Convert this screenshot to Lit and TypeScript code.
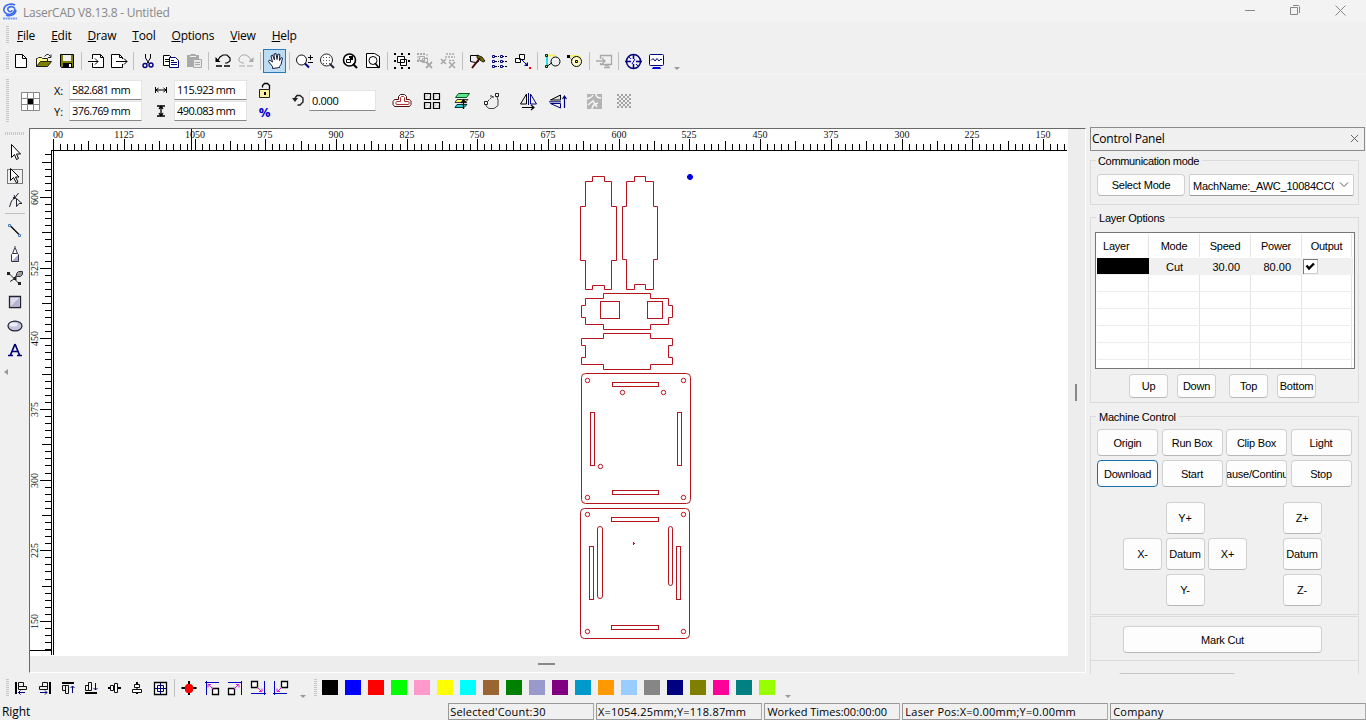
import { LitElement, html, svg, css, nothing } from "lit";
import { customElement } from "lit/decorators.js";

/* Icon glyphs, drawn on a 20x20 grid centred on 10,10 */
const K = "#000";
const N = "#00007a";
const G = "#a9a9a9";
const icons: Record<string, any> = {
  new: svg`<path d="M4.500 3.500h7l4 4v9h-11z" fill="#fff" stroke=${K}/><path d="M11.500 3.500v4h4" fill="none" stroke=${K}/>`,
  open: svg`<path d="M2.500 16V7.500h1l1-1h3l1 1h5v3" fill="#ffff90" stroke="#222"/><path d="M2.500 15.500l4-5h11l-4 5z" fill="#808000" stroke="#222"/><path d="M10.500 5.500l2-2h2l2 2M14 6.500h3v-3" fill="none" stroke="#222"/>`,
  save: svg`<path d="M3.500 3.500h13v13h-12l-1-1z" fill="#808000" stroke=${K}/><path d="M6 4h8v6H6z" fill="#f0f0f0"/><path d="M6 12h9v4H6z"/><path d="M12 13h2v3h-2z" fill="#fff"/>`,
  import: svg`<path d="M6.500 8V3.500h8l3 3v10h-11V12" fill="#fff" stroke=${K}/><path d="M14.500 3.500v3h3M2 10.500h10M9 7.500l3 3-3 3" fill="none" stroke=${K}/>`,
  export: svg`<path d="M13.500 8V6.500l-3-3h-8v13h11V13" fill="#fff" stroke=${K}/><path d="M10.500 3.500v3h3M7 10.500h11M15 7.500l3 3-3 3" fill="none" stroke=${K}/>`,
  cut: svg`<path d="M7.500 3v4l4 6M12.500 3v4l-4 6" fill="none" stroke=${K}/><circle cx="7" cy="14.500" r="2" fill="none" stroke=${N} stroke-width="1.400"/><circle cx="13" cy="14" r="2" fill="none" stroke=${N} stroke-width="1.400"/>`,
  copy: svg`<path d="M2.500 4.500h6l3 3v7h-9z" fill="#fff" stroke=${K}/><path d="M4 8.500h5M4 10.500h5" stroke=${K}/><path d="M8.500 6.500h6l3 3v7h-9z" fill="#fff" stroke=${N}/><path d="M10 9.500h3M10 11.500h6M10 13.500h6" stroke=${N}/>`,
  paste: svg`<path d="M3 4h3l1-1h4l1 1h3v4H9v8H3z" fill=${G}/><path d="M6 5.500h6" stroke="#f0f0f0"/><path d="M9.500 8.500h8v8h-8z" fill="#e8e8e8" stroke=${G}/><path d="M11 11.500h5M11 13.500h5" stroke=${G}/>`,
  undo: svg`<path d="M5 9l2-3 3-2h4l3 3v3l-3 2h-2" fill="none" stroke=${K} stroke-width="1.200"/><path d="M2.500 6v5h5z"/><path d="M3 15h6M11 15h6" stroke=${K} stroke-width="1.500"/>`,
  redo: svg`<path d="M15 9l-2-3-3-2H6L3 7v3l3 2h2" fill="none" stroke=${G}/><path d="M17.500 6v5h-5z" fill=${G}/><path d="M3 15h6M11 15h6" stroke=${G}/>`,
  hand: svg`<path d="M7.500 17.500v-2l-4-5 1-1.500 3 2-1.500-6 1.500-1 2 5-.5-6 2-.5 1 6 1-5.500 1.800.5-.3 6 1.800-3 1.200.6-1.500 6.400-1.500 2v1z" fill="#fff" stroke="#1b1b3a"/>`,
  zoompm: svg`<circle cx="7.500" cy="9" r="5" fill="#fff" stroke="#111"/><path d="M11 12.500l4 4" stroke=${N} stroke-width="2"/><path d="M14 6.500h5M16.500 4v5M14 11.500h5" stroke=${K}/>`,
  zoomsel: svg`<circle cx="9.500" cy="9" r="6" fill="#fff" stroke="#222"/><path d="M6 6.500h8M6 9.500h8M6 12.500h7" stroke="#555" stroke-dasharray="1 2"/><path d="M13 13l4 4" stroke="#223" stroke-width="2"/>`,
  zoomobj: svg`<circle cx="9.500" cy="9" r="6" fill="#fff" stroke=${K} stroke-width="1.600"/><path d="M6.500 8.500h4v3h-4z" fill="none" stroke=${K}/><path d="M9 5h4v4h-3V7H9z"/><path d="M13 13l4 4" stroke=${K} stroke-width="2"/>`,
  zoompage: svg`<path d="M3.500 2.500h8l5 3v11h-13z" fill="#fff" stroke=${K}/><circle cx="10" cy="9.500" r="4" fill="none" stroke=${K}/><path d="M12 12l4 5" stroke=${K} stroke-width="1.600"/>`,
  group: svg`<path d="M5.500 5.500h7v6h-7zM8.500 8.500h6v6h-6z" fill="#fff" stroke=${K}/><path d="M2 3h2M9 3h2M16 3h2M2 10h2M16 10h2M2 17h2M9 17h2M16 17h2" stroke=${K} stroke-width="2"/>`,
  ungroup: svg`<path d="M2 3h8M2 10h8" stroke=${G} stroke-width="2" stroke-dasharray="2 1"/><path d="M4.500 5.500h5v4h-5zM7.500 7.500h5v4h-5z" fill="none" stroke=${G}/><path d="M12 3v5M3 5v4" stroke=${G} stroke-dasharray="2 1"/><path d="M11 11l6 6M17 11l-6 6" stroke=${G} stroke-width="1.800"/>`,
  ungroupall: svg`<path d="M8 3h8M7 6h10M11 9.500h6" stroke=${G} stroke-width="1.500" stroke-dasharray="2 1"/><path d="M3 8l5 5M8 8l-5 5M11 11l6 6M17 11l-6 6" stroke=${G} stroke-width="1.700"/>`,
  hammer: svg`<path d="M3.500 4.500h8v6l-3 1-5-1z" fill="#eee" stroke=${K}/><path d="M10 4l5 2 3 4-2 1-6-4z" fill="#6b7000" stroke=${K} stroke-width=".8"/><path d="M13 7l-8 10" stroke="#400" stroke-width="2"/>`,
  nodes: svg`<path d="M5 5.500h4M12 5.500h6M5 10.500h4M12 10.500h6M5 15.500h4M12 15.500h6" stroke=${K} stroke-dasharray="2 1"/><g fill="#fff" stroke=${N}><path d="M2.500 4.500h2v2h-2zM10.500 4.500h2v2h-2zM2.500 9.500h2v2h-2zM10.500 9.500h2v2h-2zM2.500 14.500h2v2h-2zM10.500 14.500h2v2h-2z"/></g>`,
  reorder: svg`<path d="M6.500 3.500h5v5h-5zM2.500 7.500h5v4h-5z" fill="#fff" stroke=${K}/><path d="M9 9l6 6" stroke="#0000d0"/><path d="M15 11v4h-4z" fill=${N}/><path d="M16 16h2v2h-2z" fill="red"/>`,
  curvea: svg`<path d="M5 5v11" stroke="#20e0e0" stroke-width="2"/><path d="M6 4.500h8" stroke="#f4ef60" stroke-width="2"/><path d="M5 15.500l5-4" stroke=${K}/><circle cx="13.500" cy="10.500" r="4.500" fill="none" stroke=${K}/><path d="M3.500 3.500h2v2h-2zM3.500 14.500h2v2h-2z" fill="#8f8" stroke="#111"/>`,
  curveb: svg`<path d="M5 5h7l4 2" stroke="#f4ef60" stroke-width="2" fill="none"/><path d="M4 6l4 4" stroke=${K} stroke-dasharray="2 1"/><circle cx="11.500" cy="10.500" r="5" fill="#fbf9d0" stroke=${K}/><path d="M2 4h3v3H2z"/><path d="M10.500 9.500h2v2h-2z" fill="#ff0" stroke=${K}/>`,
  send: svg`<path d="M6.500 8V4.500h11v9h-11V12M10 16.500h6M11 14.500h4M2 10h9M8 7l3 3-3 3" fill="none" stroke=${G} stroke-width="1.300"/>`,
  target: svg`<circle cx="10.500" cy="10.500" r="7" fill="none" stroke=${N} stroke-width="1.500"/><path d="M10.500 3v5M10.500 13v5M2 10.500h6M13 10.500h6" stroke=${N} stroke-width="1.500"/><path d="M12 8l-3 5M6 6l2 2M13 13l2 2" stroke="#0000d0"/>`,
  monitor: svg`<rect x="3.500" y="3.500" width="14" height="11" rx="1" fill="#fff" stroke=${N}/><path d="M5 9.500l2-2 2 2.500 2-2.500 2 2.500 2-2 1 1" fill="none" stroke=${N}/><path d="M7 16h7l1 2H6z" fill="#0000e0"/>`,

  weld: svg`<path d="M6.500 8.500V5.500l2-2h4l2 2v3h3l1.500 2v3l-1.500 2h-15L1 13.500v-3l1.500-2z" fill="#fff" stroke="#4a1010"/><path d="M8.500 10.500V6.500l1-1h2l1 1v4h4l.5.500v2l-.5.500h-12l-.5-.500v-2l.5-.500z" fill="none" stroke="#b03030"/>`,
  array: svg`<g fill="#ddd" stroke=${K} stroke-width="1.200"><path d="M2.500 2.500h6v6h-6zM11.500 2.500h6v6h-6zM2.500 11.500h6v6h-6zM11.500 11.500h6v6h-6z"/></g><path d="M4 8l4-4M13 8l4-4M4 17l4-4M13 17l4-4" stroke="#fff"/>`,
  layers: svg`<path d="M6.500 2.500h11l-3 4h-11z" fill="#60e890" stroke="#075020"/><path d="M5 8.500h11l-3 3H3z" fill="#ffff50" stroke="#333"/><path d="M5 13.500h10l-3 3H3z" fill="#20d8e0" stroke="#033"/><path d="M11.500 18V10M9 12l2.500-3 3 3" fill="none" stroke=${K} stroke-width="1.300"/>`,
  nodeedit: svg`<path d="M4 14v1l3 2.500h5l4-3V9l-1-3" fill="none" stroke="#444"/><path d="M2.500 10.500h3v3h-3zM13.500 2.500h3v3h-3z" fill="#fff" stroke="#222"/><path d="M6 10l5-5M8 5h3v3" fill="none" stroke="#222" stroke-dasharray="2 1"/>`,
  mirrorh: svg`<path d="M8.500 3v10h-6z" fill="#eee" stroke=${K}/><path d="M12.500 3v10h6z" fill="#eee" stroke=${N}/><path d="M10.500 2v12" stroke=${N}/><path d="M4 16.500h12M13 14l3 2.500-3 2.500" fill="none" stroke=${K} stroke-width="1.200"/>`,
  mirrorv: svg`<path d="M12.500 4v5h-10z" fill="#ddd" stroke=${K}/><path d="M12.500 17v-4.500h-10z" fill="#eee" stroke=${N}/><path d="M1 10.800h12" stroke=${N}/><path d="M16.500 17V5M14.500 8l2-3 2 3" fill="none" stroke=${N} stroke-width="1.200"/>`,
  trace: svg`<path d="M3 3h15v15H3z" fill="#b4b4b4"/><path d="M3 8c3-2 4 0 6-4M8 18c0-4 3-5 6-6M12 3c0 3 2 4 5 4M4 14l5-4 4 6" stroke="#f4f4f4" stroke-width="1.600" fill="none"/>`,
  dither: svg`${[0, 1, 2, 3, 4, 5, 6].map((r) => svg`<path d="M${3 + (r % 2) * 2} ${4 + r * 2}H17" stroke="#a2a2a2" stroke-width="2" stroke-dasharray="2 2"/>`)}`,
  lock: svg`<path d="M7.500 6.500v-2l2-2h3l2 2v4" fill="none" stroke=${K} stroke-width="1.300"/><path d="M4.500 8.500h10v8h-10z" fill="#f8f2a0" stroke="#222"/><path d="M9 11h2v3H9z"/>`,
  width: svg`<path d="M4.500 7v6M15.500 7v6M5 10h10M7.500 8L5 10l2.500 2M12.500 8l2.500 2-2.500 2" fill="none" stroke=${K}/>`,
  height: svg`<path d="M6 5h8M6 15h8M10 5v10M8 8l2-3 2 3M8 12l2 3 2-3" fill="none" stroke=${K} stroke-width="1.300"/>`,
  rotate: svg`<path d="M7 8l2-2.500h3L15 8v4l-3 3H9.500" fill="none" stroke="#222" stroke-width="1.400"/><path d="M4 8h6l-3 4z" fill="#222"/>`,

  pick: svg`<path d="M6.500 2.500v13l3-3 2 5 2-1-2-4.500h4z" fill="#fff" stroke=${K}/>`,
  picksel: svg`<rect x="2.500" y="3.500" width="15" height="14" fill="none" stroke=${K} stroke-dasharray="1 1"/><path d="M5.500 2.500v12l3-3 3 5.500 1.500-1-2.500-5h3.500z" fill="#fff" stroke=${K}/>`,
  shape: svg`<path d="M4.500 17l2-6 4-4 3-4M9 5l2 4M11.500 8.500v8l2.500-3h3z" fill="none" stroke="#223"/><path d="M8 7h2v2H8z" fill="#223"/>`,
  line: svg`<path d="M5 5.500l10 10" stroke=${K} stroke-width="1.300"/><path d="M3.500 4.500h2v2h-2zM13.500 14.500h2v2h-2z" fill="#fff" stroke="#4878b0"/>`,
  pen: svg`<path d="M10 2v3M7.500 9.500l2-5h1l2 5M6.500 10.500l1-1h5l1 1v7h-7z" fill="#fff" stroke="#334"/><path d="M7 17l6-6v6z" fill="#a8a8cc"/>`,
  bezier: svg`<path d="M4 5.500l10 10M5 13.500l5-3 1-3" fill="none" stroke="#223"/><path d="M11.500 8.500v-3l2-2h4v3l-2 2z" fill="#999" stroke="#334"/><path d="M2 4h3v3H2zM8.500 9h3v3h-3zM13 14h3v3h-3z" fill="#222"/>`,
  rect: svg`<path d="M4.500 4.500h11v11h-11z" fill="#dcdcec" stroke="#223" stroke-width="1.300"/><path d="M14 6v8H6z" fill="#b4b4d0"/>`,
  ellipse: svg`<ellipse cx="10" cy="10" rx="7" ry="4.800" fill="#c4c4dc" stroke="#223" stroke-width="1.200"/><ellipse cx="8.500" cy="8.500" rx="4" ry="2" fill="#eeeef8"/>`,
  text: svg`<path d="M3 15.500h5M12 15.500h5M5.500 15l4.500-11M10 4l4.500 11M7.500 11.500h5" fill="none" stroke=${N} stroke-width="1.700"/>`,

  aleft: svg`<path d="M4 4v12" stroke=${K} stroke-width="2"/><path d="M6.500 4.500h5v4h-5zM6.500 8.500h8v3h-8z" fill="none" stroke="#111"/><path d="M6 14.500h7M8.500 12.500l-2 2 2 2" fill="none" stroke=${N}/>`,
  aright: svg`<path d="M15 4v12" stroke=${K} stroke-width="2"/><path d="M7.500 4.500h5v4h-5zM4.500 8.500h8v3h-8z" fill="none" stroke="#111"/><path d="M5 14.500h7M10 12.500l2 2-2 2" fill="none" stroke=${N}/>`,
  atop: svg`<path d="M4 5h12" stroke=${K} stroke-width="2"/><path d="M4.500 7.500h3v5h-3zM7.500 7.500h3v8h-3z" fill="none" stroke="#111"/><path d="M14.500 15V8M12.500 10l2-2 2 2" fill="none" stroke=${N}/>`,
  abottom: svg`<path d="M4 15h12" stroke=${K} stroke-width="2"/><path d="M4.500 7.500h3v5h-3zM7.500 4.500h3v8h-3z" fill="none" stroke="#111"/><path d="M14.500 5v7M12.500 10l2 2 2-2" fill="none" stroke=${N}/>`,
  amiddle: svg`<path d="M4 10h3M14 10h3" stroke=${K} stroke-width="2"/><path d="M6.500 7.500h3v5h-3zM10.500 5.500h3v9h-3z" fill="#fff" stroke="#111"/>`,
  acenter: svg`<path d="M10 4v3M10 14v2" stroke=${K} stroke-width="2"/><path d="M7.500 6.500h5v3h-5zM5.500 11.500h9v3h-9z" fill="#fff" stroke="#111"/><path d="M10 9v3" stroke=${K}/>`,
  apage: svg`<path d="M4.500 4.500h12v12h-12z" fill="#fff" stroke=${K} stroke-width="1.300"/><path d="M7.500 7.500h6v6h-6z" fill="none" stroke=${N}/><path d="M10.500 5v11M5 10.500h11" stroke=${N}/>`,
  dot: svg`<path d="M10 3v14M2.500 10h15" stroke=${K} stroke-width="2"/><path d="M6 8l2-2h4l2 2v5l-2 2H8l-2-2z" fill="red"/>`,
  ctl: svg`<path d="M3 4.500h14M4.500 3v14" stroke="#0000c0"/><path d="M10.500 10.500h6v6h-6z" fill="#fff" stroke=${K} stroke-width="1.300"/><path d="M6 6l5 5M6 9.500v-3h3" fill="none" stroke="#d020d0"/>`,
  ctr: svg`<path d="M3 4.500h14M16.500 3v14" stroke="#0000c0"/><path d="M3.500 10.500h6v6h-6z" fill="#fff" stroke=${K} stroke-width="1.300"/><path d="M9 11l5-5M11 6.500h3v3" fill="none" stroke="#d020d0"/>`,
  cbr: svg`<path d="M3 15.500h15M16.500 3v14" stroke="#0000c0"/><path d="M3.500 3.500h6v6h-6z" fill="#fff" stroke=${K} stroke-width="1.300"/><path d="M9 9l5 5M11 13.500h3v-3" fill="none" stroke="#d020d0"/>`,
  cbl: svg`<path d="M2 15.500h14M3.500 3v14" stroke="#0000c0"/><path d="M10.500 3.500h6v6h-6z" fill="#fff" stroke=${K} stroke-width="1.300"/><path d="M11 9l-5 5M9 13.500H6v-3" fill="none" stroke="#d020d0"/>`,
};

const icon = (n: string) =>
  html`<span class="cell ${n === "hand" ? "active" : ""}"><svg width="20" height="20" viewBox="0 0 20 20">${icons[n]}</svg></span>`;
const bar = (list: string[]) =>
  list.map((n) => (n === "|" ? html`<i class="sep"></i>` : icon(n)));

const STANDARD =
  "new open save | import export | cut copy paste | undo redo | hand | zoompm zoomsel zoomobj zoompage | group ungroup ungroupall | hammer nodes reorder | curvea curveb | send | target monitor".split(" ");
const TOOLS = "pick picksel shape | line pen bezier rect ellipse text".split(" ");
const ALIGN = "aleft aright atop abottom amiddle acenter apage | dot ctl ctr cbr cbl".split(" ");
const COLORS = [
  "#000000", "#0000ff", "#ff0000", "#00ff00", "#ff99cc", "#ffff00", "#00ffff", "#996633", "#008000", "#9999cc",
  "#800080", "#0099cc", "#ff9900", "#99ccff", "#868686", "#000080", "#808000", "#ff0099", "#008080", "#99ff00",
];

@customElement("cad-canvas")
class CadCanvas extends LitElement {
  static styles = css`
    :host { display: block; width: 1038px; height: 527px; background: #fff; }
    svg { display: block; }
    text { font: 10px "Liberation Serif", serif; fill: #111; }
    .part { fill: none; stroke: #b5141c; stroke-width: 1; }
  `;

  private rulerTop() {
    const out = [];
    for (let i = 0; i <= 143; i++) {
      const x = Math.floor(53.6 + i * 7.07) + 0.5;
      if (x > 1066) break;
      const top = i % 10 === 0 ? 139 : i % 5 === 0 ? 141 : 144;
      out.push(svg`<path d="M${x} ${top}V150" stroke="#000"/>`);
      if (i % 10 === 0 && i > 0)
        out.push(svg`<text x=${x - 0.5} y="138" text-anchor="middle">${1200 - (i / 10) * 75}</text>`);
    }
    return out;
  }

  private rulerLeft() {
    const out = [];
    for (let i = -6; i <= 64; i++) {
      const y = Math.floor(197.4 + i * 7.067) + 0.5;
      if (y > 652) break;
      const major = ((i % 10) + 10) % 10 === 0;
      const mid = ((i % 5) + 5) % 5 === 0;
      out.push(svg`<path d="M${major ? 40 : mid ? 42 : 45} ${y}H51" stroke="#000"/>`);
      if (major)
        out.push(svg`<text transform="translate(38 ${y}) rotate(-90)" text-anchor="middle">${600 - (i / 10) * 75}</text>`);
    }
    return out;
  }

  render() {
    const holes = [
      [587.5, 380.5], [683.5, 380.5], [622.5, 392.5], [663.5, 392.5], [600.5, 466.5], [587.5, 497.5], [683.5, 497.5],
      [587.5, 514.5], [683.5, 514.5], [587.5, 631.5], [683.5, 631.5],
    ];
    const slots = [
      [600.5, 301.5, 19, 17, 0], [647.5, 301.5, 15, 17, 0],
      [581.5, 373.5, 109, 130, 4], [612.5, 382.5, 46, 4, 0], [612.5, 490.5, 46, 4, 0],
      [590.5, 412.5, 4, 53, 0], [677.5, 412.5, 4, 53, 0],
      [580.5, 508.5, 109, 130, 4], [611.5, 517.5, 47, 4, 0], [611.5, 625.5, 47, 4, 0],
      [589.5, 546.5, 4, 53, 0], [676.5, 546.5, 4, 53, 0],
      [597.5, 526.5, 5, 72, 2.5], [668.5, 526.5, 4, 59, 2],
    ];
    return html`<svg width="1038" height="527" viewBox="30 129 1038 527">
      ${this.rulerTop()} ${this.rulerLeft()}
      <text x="53" y="138">00</text>
      <path d="M52 150.500H1067M51.500 150V655M53.500 150V655M30 650.500H52M191.500 129V150" stroke="#000" fill="none" />
      <g class="part">
        <path d="M592.500 176.500H604.500V181.500H611.500V206.500H616.500V260.500H611.500V289.500H604.500V285.500H592.500V289.500H585.500V260.500H580.500V206.500H585.500V181.500H592.500Z" />
        <path d="M634.500 176.500H645.500V181.500H653.500V206.500H657.500V259.500H653.500V289.500H645.500V284.500H634.500V289.500H626.500V259.500H622.500V206.500H626.500V181.500H634.500Z" />
        <path d="M603.500 293.500H650.500V298.500H668.500V305.500H672.500V317.500H668.500V324.500H650.500V329.500H603.500V324.500H585.500V317.500H581.500V305.500H585.500V298.500H603.500Z" />
        <path d="M603.500 333.500H650.500V338.500H672.500V345.500H668.500V357.500H672.500V364.500H650.500V369.500H603.500V364.500H581.500V357.500H585.500V345.500H581.500V338.500H603.500Z" />
        ${slots.map(([x, y, w, h, r]) => svg`<rect x=${x} y=${y} width=${w} height=${h} rx=${r}/>`)}
        ${holes.map(([x, y]) => svg`<circle cx=${x} cy=${y} r="2.200"/>`)}
        <path d="M633.500 542v3M634 543.500h1" />
      </g>
      <path d="M689 174h2l2 2v2l-2 2h-2l-2-2v-2z" fill="#0000e0" />
    </svg>`;
  }
}

@customElement("control-panel")
class ControlPanel extends LitElement {
  static styles = css`
    :host { display: flex; flex-direction: column; width: 276px; height: 547px; overflow: hidden;
      font: 11px "Liberation Sans", Arial, sans-serif; color: #000; letter-spacing: -0.22px; }
    * { box-sizing: border-box; }
    .head { display: flex; justify-content: space-between; align-items: center; height: 24px; width: 275px; flex: none;
      border: 1px solid #8c8c8c; padding: 0 5px 1px 1px; font: 12px "Open Sans", sans-serif; }
    .head span { letter-spacing: -0.25px; }
    .box { width: 269px; border: 1px solid #dcdcdc; flex: none; }
    .legend { width: fit-content; height: 14px; line-height: 14px; margin: -7px 0 0 5px; padding: 0 3px; background: #f0f0f0; }
    .comm { height: 45px; margin-top: 9px; }
    .comm .legend { letter-spacing: -0.33px; padding-left: 2px; }
    .layer { height: 186px; margin-top: 12px; }
    .machine { height: 199px; margin-top: 13px; }
    .mark { height: 45px; margin-top: 1px; padding: 9px 0 0 32px; }
    .tail { height: 20px; border-top: 0; padding: 12px 0 0 27px; }
    .tail div { width: 118px; height: 10px; border-top: 1px solid #c4c4c4; border-radius: 4px; }
    .row { display: flex; }
    .btn { display: flex; align-items: center; justify-content: center; background: #fdfdfd; border: 1px solid #d0d0d0;
      border-bottom-color: #b8b8b8; border-radius: 4px; white-space: nowrap; overflow: hidden; height: 24px; width: 39px; }
    .comm .row { margin: 6px 0 0 6px; gap: 4px; align-items: center; }
    .comm .btn { width: 88px; height: 22px; }
    .combo { width: 165px; height: 22px; display: flex; align-items: center; border: 1px solid #cfcfcf; border-bottom-color: #999;
      background: #fff; padding: 0 4px 0 3px; justify-content: space-between; border-radius: 2px; }
    .combo span { width: 141px; overflow: hidden; white-space: nowrap; letter-spacing: -0.24px; line-height: 16px; padding-top: 1px; }
    .grid { width: 260px; height: 137px; margin: 7px 0 0 4px; border: 1px solid #767676; background: #fff; padding: 1px; }
    .tr { display: grid; grid-template-columns: 52px 51px 51px 51px 50px; height: 17px; border-bottom: 1px solid #ececec; }
    .tr > * { border-right: 1px solid #e4e4e4; display: flex; align-items: center; justify-content: center; }
    .tr.h { height: 24px; border: 0; padding-bottom: 1px; }
    .tr.h > :first-child { justify-content: flex-start; padding-left: 6px; }
    .tr.v { background: #f0f0f0; border: 0; }
    .tr.v > * { border: 0; letter-spacing: 0; }
    .tr.v > :nth-child(3), .tr.v > :nth-child(4) { justify-content: flex-end; padding-right: 11px; }
    .tr.v > :last-child { justify-content: flex-start; padding-left: 1px; }
    .swatch { background: #000; height: 16px; }
    .order { margin: 5px 0 0 38px; }
    .order .btn { margin-right: 9px; }
    .order .btn:nth-child(2) { margin-right: 13px; }
    .cmds { display: grid; grid-template-columns: repeat(4, 61px); column-gap: 3.500px; row-gap: 4px; margin: 5px 0 0 6px; }
    .cmds .btn { width: 61px; height: 27px; }
    .cmds .focus { border: 1px solid #1a6fae; }
    .jog { display: grid; grid-template-columns: 39px 39px 39px 39px; grid-template-rows: repeat(3, 32px); row-gap: 4px;
      column-gap: 3.500px; margin: 15px 0 0 32px; }
    .jog .btn { width: 39px; height: 32px; }
    .jog .z { margin-left: 32px; }
    .mark .btn { width: 199px; height: 27px; }
  `;
  render() {
    return html`
      <div class="head"><span>Control Panel</span>
        <svg width="9" height="9" viewBox="0 0 9 9"><path d="M1 1l7 7M8 1l-7 7" stroke="#666" /></svg></div>
      <div class="box comm"><div class="legend">Communication mode</div>
        <div class="row"><div class="btn">Select Mode</div>
          <div class="combo"><span>MachName:_AWC_10084CC0</span>
            <svg width="10" height="6" viewBox="0 0 10 6"><path d="M1 .500l4 4 4-4" fill="none" stroke="#555" /></svg></div></div></div>
      <div class="box layer"><div class="legend">Layer Options</div>
        <div class="grid">
          <div class="tr h">${["Layer", "Mode", "Speed", "Power", "Output"].map((t) => html`<div>${t}</div>`)}</div>
          <div class="tr v"><div class="swatch"></div><div>Cut</div><div>30.00</div><div>80.00</div>
            <div><svg width="15" height="15" viewBox="0 0 15 15"><path d="M.500.500h14v14H.500z" fill="#fff" stroke="#ccc" />
              <path d="M.500 15V.500H15" fill="none" stroke="#777" /><path d="M3.500 6.500l2.500 3 5-5" fill="none" stroke="#000" stroke-width="2.400" /></svg></div></div>
          ${[0, 1, 2, 3, 4, 5].map((i) => html`<div class="tr" style=${i === 5 ? "height:8px;border:0" : nothing}>
            <div></div><div></div><div></div><div></div><div></div></div>`)}
        </div>
        <div class="row order">${["Up", "Down", "Top", "Bottom"].map((t) => html`<div class="btn">${t}</div>`)}</div></div>
      <div class="box machine"><div class="legend">Machine Control</div>
        <div class="cmds">${["Origin", "Run Box", "Clip Box", "Light", "Download", "Start", "Pause/Continue", "Stop"].map(
          (t) => html`<div class="btn ${t === "Download" ? "focus" : ""}">${t}</div>`)}</div>
        <div class="jog">
          <i></i><div class="btn">Y+</div><i></i><div class="btn z">Z+</div>
          <div class="btn">X-</div><div class="btn">Datum</div><div class="btn">X+</div><div class="btn z">Datum</div>
          <i></i><div class="btn">Y-</div><i></i><div class="btn z">Z-</div>
        </div></div>
      <div class="box mark"><div class="btn">Mark Cut</div></div>
      <div class="box tail"><div></div></div>`;
  }
}

@customElement("app-root")
class AppRoot extends LitElement {
  static styles = css`
    :host { display: flex; flex-direction: column; width: 1366px; height: 720px; overflow: hidden; background: #f0f0f0;
      font: 12px "Open Sans", sans-serif; color: #000; }
    * { box-sizing: border-box; }
    .title { display: flex; align-items: center; height: 22px; padding: 0 20px 0 2px; background: #f3f3f3; color: #888; flex: none; }
    .title b { font-weight: 400; margin-left: 5px; flex: 1; letter-spacing: -0.24px; padding-top: 2px; }
    .wm { display: flex; gap: 34px; margin-top: -1px; }
    .menu { display: flex; height: 26px; align-items: center; padding-left: 6px; flex: none; gap: 16px; }
    .menu .grip { margin-right: -8px; }
    .menu u { text-decoration: underline; text-underline-offset: 1px; }
    .menu span { letter-spacing: -0.22px; }
    .grip { width: 3px; height: 18px; background: repeating-linear-gradient(#c6c6c6 0 1px, transparent 1px 2px); flex: none; }
    .tb { display: flex; align-items: center; height: 26px; padding-left: 6px; flex: none; }
    .tb .grip { margin-right: 0.400px; }
    .cell { width: 23px; height: 24px; display: flex; align-items: center; justify-content: center; flex: none; }
    .cell svg { flex: none; }
    .active { background: #bcdcf4; border: 1px solid #2a7ab8; height: 24px; }
    .sep { width: 1px; height: 18px; margin: 0 2.500px; background: #c0c0c0; flex: none; }
    .drop { width: 0; border: 3px solid transparent; border-top: 3px solid #999; border-bottom: 0; align-self: flex-end; margin: 0 0 4px 7px; }
    .props { display: flex; height: 53px; padding-left: 6px; align-items: center; flex: none; border-top: 1px solid #f5f5f5; font-size: 11px; }
    .props .grip { height: 44px; }
    .nine { margin-left: 12px; }
    .fields { display: grid; grid-template-rows: 19px 19px; row-gap: 2px; align-items: center; margin-top: -1px; }
    .fields .cell { height: 19px; }
    .fields.pos { grid-template-columns: 15px 73px; margin-left: 14px; }
    .fields.dim { grid-template-columns: 25px 73px; margin-left: 7px; justify-items: start; }
    .inp { width: 73px; height: 20px; line-height: 17px; background: #fff; border: 1px solid #e4e4e4; border-bottom-color: #888; padding-left: 2px;
      letter-spacing: -0.580px; white-space: nowrap; }
    .lockcol { display: flex; flex-direction: column; margin-left: 6px; align-items: center; }
    .pct { color: #0000d0; font-weight: 700; font-size: 13px; line-height: 19px; height: 20px; }
    .rot { display: flex; align-items: center; margin: 0 0 2px 10px; }
    .rot .inp { width: 67px; height: 21px; line-height: 19px; letter-spacing: -0.300px; }
    .fx { display: flex; margin-left: 11px; }
    .fx .cell { width: 30px; }
    .gap { width: 6px; }
    .main { display: flex; height: 547px; flex: none; }
    .side { width: 29px; display: flex; flex-direction: column; align-items: center; padding: 5px 0 0 0; }
    .side .hg { width: 19px; height: 3px; background: repeating-linear-gradient(90deg, #c6c6c6 0 1px, transparent 1px 2px); margin: 0 0 5px; }
    .side .sep { width: 20px; height: 1px; margin: 1px 0 4px; }
    .side .cell { height: 24px; }
    .back { width: 0; border: 3px solid transparent; border-right: 4px solid #999; border-left: 0; align-self: flex-start; margin: 7px 0 0 4px; }
    .view { display: grid; grid-template-columns: 1038px 17px; grid-template-rows: 527px 17px; width: 1057px; height: 545px; margin-top: 1px;
      border: 1px solid #fff; border-left: 1px solid #696969; border-top: 1px solid #696969; background: #ededed; }
    .vt { width: 2px; height: 17px; background: #888; align-self: center; justify-self: center; margin-left: -2px; }
    .ht { width: 17px; height: 2px; background: #888; align-self: center; justify-self: center; margin: -2px 0 0 -6px; }
    .panel { margin-left: 4px; }
    .low { display: flex; align-items: center; height: 28px; padding: 0 0 1px 6px; flex: none; }
    .low .cells { display: flex; margin-left: 1.900px; align-items: center; }
    .low .drop { margin: 0 0 3px 7px; }
    .low .grip2 { margin-left: 8.600px; }
    .pal { display: flex; gap: 7px; margin-left: 5px; }
    .pal i { width: 16px; height: 15px; }
    .low .pal + .drop { margin-left: 10px; }
    .status { display: flex; height: 18px; gap: 2px; flex: none; font-size: 11px; line-height: 16px; white-space: nowrap; letter-spacing: 0.2px; padding-top: 1px; }
    .status div { border: 1px solid #999; border-right-color: #aaa; padding-left: 1.500px; height: 17px; }
    .status .s0 { border: 0; width: 446px; font-size: 12px; line-height: 17px; letter-spacing: -0.1px; padding-left: 2px; }
    .status .s3, .status .s4, .status .s5 { padding-left: 2px; }
    .s1 { width: 146px; } .s2 { width: 167px; } .s3 { width: 136px; } .s4 { width: 206px; } .s5 { width: 256px; }
    .status .s3 { letter-spacing: 0; }
    .status .s4 { letter-spacing: 0.24px; }
  `;

  render() {
    const menu = ["File", "Edit", "Draw", "Tool", "Options", "View", "Help"];
    const status = ["Right", "Selected'Count:30", "X=1054.25mm;Y=118.87mm", "Worked Times:00:00:00", "Laser Pos:X=0.00mm;Y=0.00mm", "Company"];
    return html`
      <div class="title">
        <svg width="16" height="17" viewBox="0 0 16 17"><g fill="none" stroke="#3a6cf0" stroke-width="1.600">
          <path d="M13 2C9 0 3 1.500 2 5.500s3 6.500 7 5.500 5-6 2-7-6 .500-5 3 4 2 4 0" /><path d="M4 12c4 2 9 0 10-5" /></g>
          <path d="M1 15.500h14" stroke="#7fa0f4" stroke-width="2" stroke-dasharray="2 .500" /></svg>
        <b>LaserCAD V8.13.8 - Untitled</b>
        <div class="wm">
          <svg width="11" height="11" viewBox="0 0 11 11"><path d="M0 5.500h10" stroke="#888" /></svg>
          <svg width="11" height="11" viewBox="0 0 11 11"><path d="M.500 2.500h7v7h-7zM3 .500h5.500l1 1V8" fill="none" stroke="#888" /></svg>
          <svg width="11" height="11" viewBox="0 0 11 11"><path d="M.500.500l10 10M10.500.500l-10 10" stroke="#888" /></svg>
        </div>
      </div>
      <div class="menu"><i class="grip"></i>${menu.map((m) => html`<span><u>${m[0]}</u>${m.slice(1)}</span>`)}</div>
      <div class="tb"><i class="grip"></i>${bar(STANDARD)}<i class="drop"></i></div>
      <div class="props"><i class="grip"></i>
        <svg class="nine" width="19" height="19" viewBox="0 0 19 19"><path d="M.500.500h18v18H.500zM6.500 0v19M12.500 0v19M0 6.500h19M0 12.500h19" fill="#fff" stroke="#888" /><path d="M7 7h5v5H7z" /></svg>
        <div class="fields pos"><span>X:</span><div class="inp">582.681 mm</div><span>Y:</span><div class="inp">376.769 mm</div></div>
        <div class="fields dim">${icon("width")}<div class="inp">115.923 mm</div>${icon("height")}<div class="inp">490.083 mm</div></div>
        <div class="lockcol">${icon("lock")}<span class="pct">%</span></div>
        <div class="rot">${icon("rotate")}<div class="inp">0.000</div></div>
        <div class="fx">${bar(["weld", "array", "layers", "nodeedit"])}<i class="gap"></i>${bar(["mirrorh", "mirrorv"])}<i class="gap"></i>${bar(["trace", "dither"])}</div>
      </div>
      <div class="main">
        <div class="side"><i class="hg"></i>${bar(TOOLS)}<i class="back"></i></div>
        <div class="view"><cad-canvas></cad-canvas><i class="vt"></i><i class="ht"></i></div>
        <control-panel class="panel"></control-panel>
      </div>
      <div class="low"><i class="grip"></i><div class="cells">${bar(ALIGN)}</div><i class="drop"></i>
        <i class="grip grip2"></i><div class="pal">${COLORS.map((c) => html`<i style="background:${c}"></i>`)}</div><i class="drop"></i></div>
      <div class="status">${status.map((s, i) => html`<div class="s${i}">${s}</div>`)}</div>`;
  }
}
